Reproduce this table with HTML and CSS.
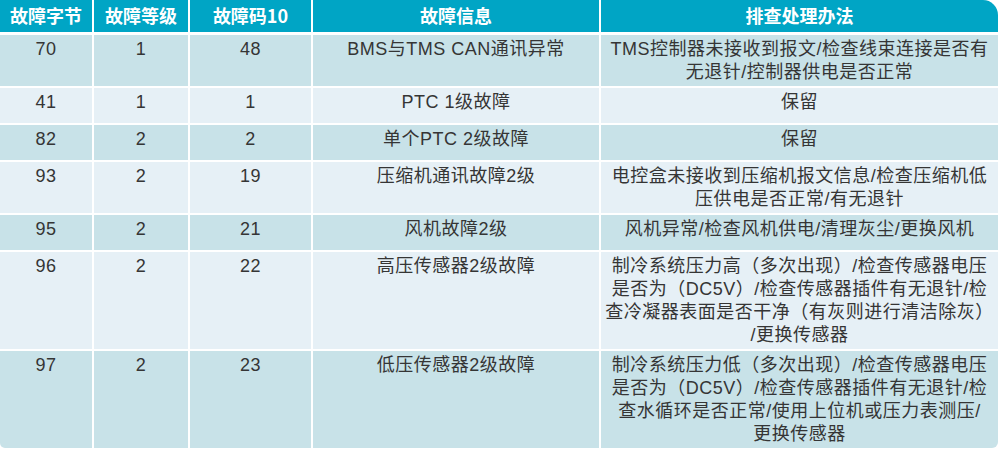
FILE: index.html
```html
<!DOCTYPE html>
<html lang="zh-CN">
<head>
<meta charset="utf-8">
<title>故障码表</title>
<link rel="stylesheet" href="styles.css">
</head>
<body>
<div class="wrap">
<table class="fault">
<colgroup>
<col class="c1"><col class="c2"><col class="c3"><col class="c4"><col class="c5">
</colgroup>
<thead>
<tr><th>故障字节</th><th>故障等级</th><th>故障码10</th><th>故障信息</th><th>排查处理办法</th></tr>
</thead>
<tbody>
<tr><td>70</td><td>1</td><td>48</td><td>BMS与TMS CAN通讯异常</td><td>TMS控制器未接收到报文/检查线束连接是否有<br>无退针/控制器供电是否正常</td></tr>
<tr><td>41</td><td>1</td><td>1</td><td>PTC 1级故障</td><td>保留</td></tr>
<tr><td>82</td><td>2</td><td>2</td><td>单个PTC 2级故障</td><td>保留</td></tr>
<tr><td>93</td><td>2</td><td>19</td><td>压缩机通讯故障2级</td><td>电控盒未接收到压缩机报文信息/检查压缩机低<br>压供电是否正常/有无退针</td></tr>
<tr><td>95</td><td>2</td><td>21</td><td>风机故障2级</td><td>风机异常/检查风机供电/清理灰尘/更换风机</td></tr>
<tr><td>96</td><td>2</td><td>22</td><td>高压传感器2级故障</td><td>制冷系统压力高（多次出现）/检查传感器电压<br>是否为（DC5V）/检查传感器插件有无退针/检<br>查冷凝器表面是否干净（有灰则进行清洁除灰）<br>/更换传感器</td></tr>
<tr><td>97</td><td>2</td><td>23</td><td>低压传感器2级故障</td><td>制冷系统压力低（多次出现）/检查传感器电压<br>是否为（DC5V）/检查传感器插件有无退针/检<br>查水循环是否正常/使用上位机或压力表测压/<br>更换传感器</td></tr>
</tbody>
</table>
</div>
</body>
</html>
```
FILE: styles.css
```css
html, body {
  margin: 0;
  padding: 0;
  background: #ffffff;
}
.wrap {
  width: 998px;
  overflow: hidden;
  border-radius: 0 15px 6px 5px;
}
.fault {
  width: 998px;
  table-layout: fixed;
  border-collapse: separate;
  border-spacing: 0;
  font-family: "Liberation Sans", "Noto Sans CJK SC", sans-serif;
  color: #353535;
}
.c1 { width: 92px; }
.c2 { width: 96px; }
.c3 { width: 123px; }
.c4 { width: 288px; }
.c5 { width: 399px; }
.fault th {
  background: #00a5c5;
  color: #ffffff;
  font-weight: bold;
  font-size: 18px;
  height: 35px;
  padding: 0 0 3px 0;
  line-height: 22px;
  text-align: center;
  vertical-align: middle;
  border-left: 2px solid #ffffff;
  border-bottom: 3px solid #ffffff;
  box-sizing: border-box;
  font-family: "Noto Sans CJK SC", "Liberation Sans", sans-serif;
}
.fault td {
  font-size: 18px;
  letter-spacing: 0.5px;
  line-height: 23px;
  padding: 3px 0 2px 0;
  height: 37px;
  box-sizing: border-box;
  text-align: center;
  vertical-align: top;
  white-space: nowrap;
  border-left: 2px solid #ffffff;
  border-top: 2px solid #ffffff;
}
.fault th:first-child,
.fault td:first-child {
  border-left: none;
}
.fault tbody tr:first-child td {
  border-top: none;
}
.fault tbody tr:nth-child(odd) td {
  background: #c8e2e8;
}
.fault tbody tr:nth-child(even) td {
  background: #e6f0f6;
}
```
